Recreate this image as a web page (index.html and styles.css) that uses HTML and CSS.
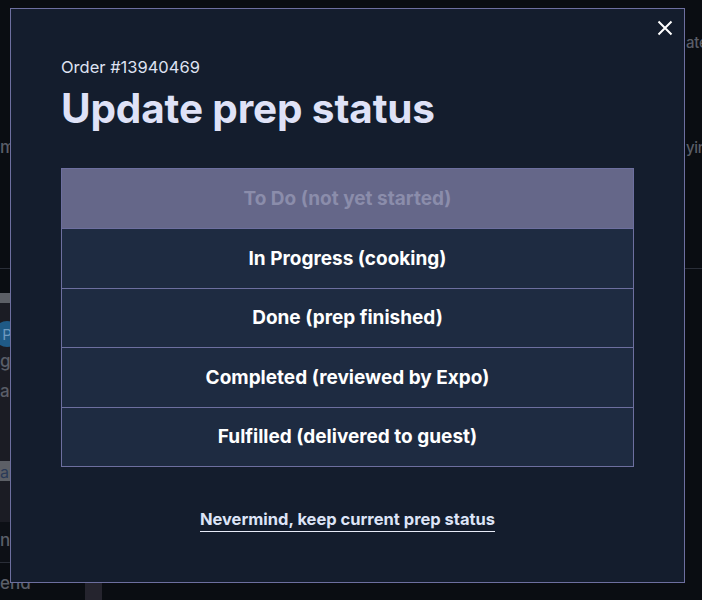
FILE: index.html
```html
<!DOCTYPE html>
<html lang="en">
<head>
<meta charset="utf-8">
<title>Update prep status</title>
<link rel="stylesheet" href="styles.css">
</head>
<body>
<div class="app">
  <aside class="side">
    <div class="side-top"><span class="frag frag-m">m</span></div>
    <div class="side-bar"></div>
    <div class="side-card">
      <span class="avatar">P</span>
      <span class="frag">g</span>
      <span class="frag">a</span>
      <span class="tag">ar</span>
    </div>
    <div class="side-row"><span class="frag">nd</span></div>
    <div class="side-row last"><span class="frag">end</span><span class="nub"></span></div>
  </aside>
  <main class="main">
    <div class="main-top">
      <span class="frag">ate</span>
      <span class="frag frag-y">yin</span>
    </div>
    <div class="main-bottom"></div>
  </main>
</div>

<div class="overlay">
  <div class="modal" role="dialog" aria-labelledby="title">
    <button class="close" aria-label="Close">
      <svg viewBox="0 0 16 16" width="16" height="16"><path d="M1.5 1.5L14.5 14.5M14.5 1.5L1.5 14.5" stroke="#ffffff" stroke-width="2" fill="none"/></svg>
    </button>
    <p class="order">Order #13940469</p>
    <h1 id="title" class="title">Update prep status</h1>
    <ul class="options">
      <li class="opt current">To Do (not yet started)</li>
      <li class="opt">In Progress (cooking)</li>
      <li class="opt">Done (prep finished)</li>
      <li class="opt">Completed (reviewed by Expo)</li>
      <li class="opt">Fulfilled (delivered to guest)</li>
    </ul>
    <div class="footer"><a class="cancel" href="#">Nevermind, keep current prep status</a></div>
  </div>
</div>
</body>
</html>
```

FILE: styles.css
```css
* { box-sizing: border-box; }
html, body { margin: 0; height: 100%; }
body {
  background: #0a0d12;
  font-family: Inter, "Noto Sans", sans-serif;
  color: #e6e8f5;
  overflow: hidden;
}

/* background app (dimmed) */
.app { display: flex; height: 600px; }
.side { width: 102px; flex-shrink: 0; display: flex; flex-direction: column; background: #0a0d12; }
.side-top { height: 269px; border-bottom: 1px solid #2a2e38; padding-top: 137px; }
.frag { color: #5a5e68; font-size: 17px; font-weight: 500; display: block; white-space: nowrap; }
.side-bar { height: 10px; margin-top: 24px; background: #5c5f66; }
.side-card { background: #1b1c24; padding: 18px 0 0; height: 219px; display: flex; flex-direction: column; gap: 4px; }
.avatar { width: 26px; height: 26px; border-radius: 50%; background: #1f5a86; color: #6f9ac0; font-size: 15px; display: flex; align-items: center; justify-content: center; margin-left: -6px; }
.side-card .frag { height: 26px; }
.tag { background: #5c5f66; color: #2a3a58; font-size: 16px; padding: 1px 0; height: 20px; margin-top: 50px; }
.side-row { height: 41px; border-bottom: 1px solid #2a2e38; background: #0d1016; padding-top: 8px; }
.side-row.last { border: 0; display: flex; justify-content: space-between; height: auto; flex: 1; padding-top: 10px; background: #0a0d12; }
.nub { width: 17px; background: #25242e; margin-top: -10px; }
.main { flex: 1; min-width: 0; overflow: hidden; display: flex; flex-direction: column; }
.main-top { height: 269px; border-bottom: 1px solid #2a2e38; padding: 33px 0 0 584px; }
.main-top .frag { font-size: 15px; letter-spacing: -0.3px; }
.frag-y { margin-top: 86px; }

/* modal */
.overlay { position: fixed; inset: 0; }
.modal {
  position: absolute;
  left: 10px; top: 8px;
  width: 675px; height: 575px;
  background: #141d2d;
  border: 1px solid #6d6f9f;
  padding: 46px 50px 0;
}
.close {
  position: absolute; top: 10px; right: 10px;
  width: 18px; height: 18px; padding: 0; border: 0; background: none;
  display: flex; align-items: center; justify-content: center;
}
.order { margin: 0; font-size: 16.5px; font-weight: 400; color: #dfe2f2; line-height: 24px; }
.title { margin: 4px 0 0; font-size: 40.5px; font-weight: 700; color: #dfe2f7; line-height: 52px; letter-spacing: -0.15px; }
.options { list-style: none; margin: 33px 0 0; padding: 0; border: 1px solid #6d6f9f; }
.opt {
  height: 59.4px;
  display: flex; align-items: center; justify-content: center;
  background: #1e2b41;
  color: #ffffff;
  font-size: 19px; font-weight: 700;
  border-top: 1px solid #6d6f9f;
}
.opt:first-child { border-top: 0; }
.opt.current { background: #656789; color: #8b8dab; }
.footer { display: flex; justify-content: center; margin-top: 42px; }
.cancel { color: #dde4f7; font-size: 16.5px; font-weight: 700; text-decoration: none; border-bottom: 1.5px solid #e8ecf8; padding-bottom: 2px; }
```
